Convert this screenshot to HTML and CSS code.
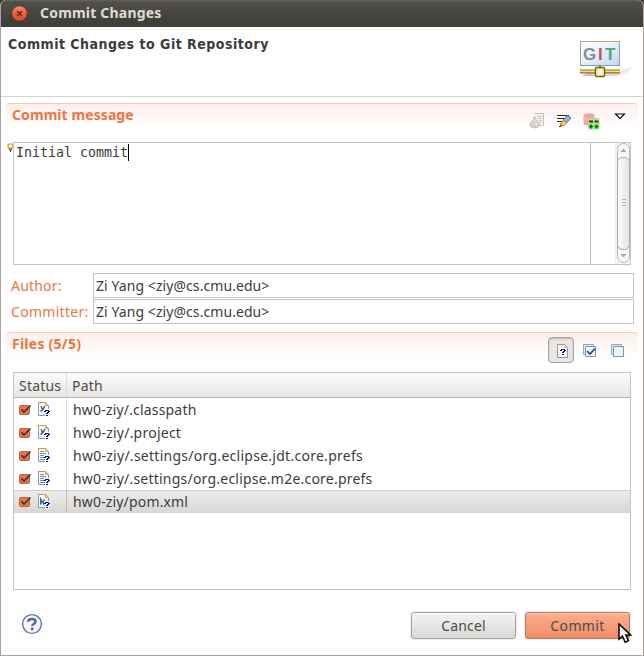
FILE: index.html
```html
<!DOCTYPE html>
<html lang="en">
<head>
<meta charset="utf-8">
<title>Commit Changes</title>
<link rel="stylesheet" href="styles.css">
</head>
<body>
<svg class="defs" width="0" height="0" aria-hidden="true">
  <defs>
    <linearGradient id="close" x2="0" y2="1"><stop stop-color="#f79070"/><stop offset=".5" stop-color="#ee6137"/><stop offset="1" stop-color="#dc4a20"/></linearGradient>
    <linearGradient id="screen" x2="1" y2="1"><stop stop-color="#fff"/><stop offset=".4" stop-color="#edf4fa"/><stop offset="1" stop-color="#bed6ee"/></linearGradient>
    <linearGradient id="shade"><stop stop-color="#aaa4bd"/><stop offset="1" stop-color="#f4f3f8"/></linearGradient>
    <linearGradient id="thumb"><stop stop-color="#fbfbfa"/><stop offset="1" stop-color="#e6e4e2"/></linearGradient>
    <symbol id="check" viewBox="0 0 14 14">
      <rect x="1.5" y="2.5" width="10" height="9" rx="1.5" fill="#ed7442" stroke="#c4623f"/>
      <path d="M3.5 6.3 6 9 12.5 2.5" fill="none" stroke="#3b3634" stroke-width="1.7"/>
    </symbol>
    <symbol id="page" viewBox="0 0 13 15">
      <path d="M.5.5h7l3 3v10H.5z" fill="#f3f8fe" stroke="#8798b4"/>
      <path d="M.5 7V.5h7l3 3" fill="none" stroke="#b79c58"/>
      <path d="M7.5.5v3h3z" fill="#e4c778" stroke="#b79c58" stroke-width=".6"/>
    </symbol>
    <symbol id="mark" viewBox="0 0 6 8">
      <path d="M0 0h6v4H5v4H1V4H0z" fill="#fff"/>
      <path d="M1 1h4v1H1zM0 2h2v1H0zM4 2h2v1H4zM3 3h2v1H3zM2 4h2v1H2zM2 6h2v1H2z" fill="#000d98" shape-rendering="crispEdges"/>
    </symbol>
    <symbol id="file-y" viewBox="0 0 13 15"><use href="#page" width="13" height="15"/><path d="M3 4.3 4.4 7.5M7 4 4.7 7.7 2.5 9.5" fill="none" stroke="#365681" stroke-width="1.3"/><use href="#mark" x="6" y="7" width="6" height="8"/></symbol>
    <symbol id="file-text" viewBox="0 0 13 15"><use href="#page" width="13" height="15"/><path d="M2 3.5h4M2 5.5h6M2 7.5h6M2 9.5h5M2 11.5h5" stroke="#6d8db7"/><use href="#mark" x="6" y="7" width="6" height="8"/></symbol>
    <symbol id="file-m" viewBox="0 0 13 15"><use href="#page" width="13" height="15"/><path d="M2.8 10.5v-5L6 10V5.5" fill="none" stroke="#286ba5" stroke-width="1.6"/><use href="#mark" x="6" y="7" width="6" height="8"/></symbol>
  </defs>
</svg>
<div class="window">
  <div class="titlebar">
    <svg class="close" viewBox="0 0 17 17"><circle cx="8.5" cy="8.5" r="7.8" fill="url(#close)" stroke="#393630" stroke-width=".8"/><path d="m6 6 5 5m0-5-5 5" stroke="#572d20" stroke-width="1.4"/></svg>
    <span class="title">Commit Changes</span>
  </div>
  <div class="banner">
    <span class="heading">Commit Changes to Git Repository</span>
    <svg class="git" viewBox="0 0 60 42">
      <path d="M2 37 14 32h28l15-7-8 8-9 4z" fill="url(#shade)" opacity=".75"/>
      <rect x="1.5" y="2.5" width="39" height="24" fill="url(#screen)" stroke="#9a9d9e"/>
      <path d="M1 2.5h40" stroke="#c7a381"/><path d="M1 26.5h40" stroke="#7aa0b8"/>
      <text x="4" y="21" class="git-letters"><tspan fill="#8b8e93">G</tspan><tspan x="19" fill="#c25661">I</tspan><tspan x="26" fill="#55a47a">T</tspan></text>
      <path d="M21 27v4" stroke="#50765b" stroke-width="2"/>
      <path d="M1 32.5h40" stroke="#8b7314" stroke-width="4"/><path d="M1 32.3h40" stroke="#eee07a" stroke-width="1.8"/>
      <rect x="16.5" y="28.5" width="9" height="9" rx="1" fill="#f5e7a4" stroke="#806300" stroke-width="1.4"/><rect x="18.5" y="30.5" width="5" height="5" fill="#fffdf0"/>
    </svg>
  </div>
  <div class="section message-section">
    <span class="section-title message-title">Commit message</span>
    <div class="tools message-tools">
      <svg width="16" height="16" viewBox="0 0 16 16"><path d="M5.5.5h9v12H9" fill="#f2f1ef" stroke="#c5c3c0"/><path d="M8 3.5h5M9 5.5h4M10 7.5h3M10 9.5h3" stroke="#c9c7c4"/><path d="M5 3 7 6.5 10 11l-1 3-4 1-4-2 1-4 3-3z" fill="#e2e0dd" stroke="#b9b7b4"/><path d="m4 8 2 2-3 2 4 1" fill="none" stroke="#c2c0bc"/></svg>
      <svg width="16" height="16" viewBox="0 0 16 16"><path d="M1 2.5h12M1 5.5h9M1 8.5h6" stroke="#282b30" stroke-width="1.2"/><path d="M7 7 11.5 2.5 15 5l-4.5 5z" fill="#85b5e8" stroke="#4671a9"/><path d="M5 10 7.5 7l3 3L8 12.5 4 13.5z" fill="#f7cd51" stroke="#b9892c"/><path d="m3 14 3-2" stroke="#333"/></svg>
      <svg width="17" height="17" viewBox="0 0 17 17"><rect x=".5" y=".5" width="11" height="12" rx="3" fill="#f7a1a3"/><path d="M1 5.5q5 2 10 0" fill="none" stroke="#fcc6c7"/><rect x="5" y="5" width="11.5" height="11.5" rx="1.5" fill="#92f292"/><path d="M6 8.5h4m1.5 0h4" stroke="#a9000d" stroke-width="2"/><path d="M6 13.5h4m1.5 0h4M8 11.5v4m5.5-4v4" stroke="#096b13" stroke-width="1.7"/></svg>
      <svg class="menu-arrow" width="12" height="7" viewBox="0 0 12 7"><path d="M1.5 1h9L6 5.5z" fill="#fff" stroke="#111" stroke-width="1.2"/></svg>
    </div>
  </div>
  <div class="editor-row">
    <svg class="bulb" width="7" height="10" viewBox="0 0 7 10"><path d="M2 5 1 4V2l1-1h3l1 1v2L5 5z" fill="#fff7d5" stroke="#d9932c" stroke-width="1.2"/><path d="M2.4 5.2v2h2v-2M3.5 6v3" fill="none" stroke="#665744"/></svg>
    <div class="editor">
      <div class="editor-page"><span class="message">Initial commit</span></div>
      <svg class="scroll" width="16" height="121" viewBox="0 0 16 121"><rect width="16" height="121" fill="#f3f2f0"/><rect x="3.5" y=".5" width="12" height="119" rx="6" fill="#f8f7f6" stroke="#bab7b3"/><rect x="3.5" y="14.5" width="12" height="92" rx="5" class="thumb"/><path d="M6.5 9 9.5 5.5l3 3.5zM6.5 111h6l-3 3.5z" fill="#aaa8a5"/><path d="M8 56.5h4m-4 3h4m-4 3h4" stroke="#bbb9b6"/></svg>
    </div>
  </div>
  <div class="people">
    <span class="person-label">Author:</span><div class="field">Zi Yang &lt;ziy@cs.cmu.edu&gt;</div>
    <span class="person-label committer">Committer:</span><div class="field">Zi Yang &lt;ziy@cs.cmu.edu&gt;</div>
  </div>
  <div class="section files-section">
    <span class="section-title files-title">Files (5/5)</span>
    <div class="tools file-tools">
      <div class="toggle"><svg width="12" height="15" viewBox="0 0 12 15"><path d="M.5.5h7l3 3v10H.5z" fill="#edf5ff" stroke="#8596ae"/><path d="M.5 8V.5h7l3 3" fill="none" stroke="#b59c60"/><path d="M7.5 1v3H10z" fill="#dfbd68"/><use href="#mark" x="3" y="4" width="6" height="8"/></svg></div>
      <svg width="14" height="14" viewBox="0 0 14 14"><path d="M.5.5h10v10H.5z" fill="#dceaf7" stroke="#8ba8c5"/><path d="M2.5 2.5h10v10h-10z" fill="#f1f9ff" stroke="#7e91b0"/><path d="m4 7 3 3 5-5.5" fill="none" stroke="#34465f" stroke-width="1.7"/></svg>
      <svg width="14" height="14" viewBox="0 0 14 14"><path d="M.5.5h10v10H.5z" fill="#dceaf7" stroke="#8ba8c5"/><path d="M2.5 2.5h10v10h-10z" fill="#eaf5ff" stroke="#7e91b0"/></svg>
    </div>
  </div>
  <div class="table">
    <div class="row head"><span class="status">Status</span><span class="path">Path</span></div>
    <div class="row"><span class="status"><svg class="check"><use href="#check"/></svg><svg class="file"><use href="#file-y"/></svg></span><span class="path p1">hw0-ziy/.classpath</span></div>
    <div class="row"><span class="status"><svg class="check"><use href="#check"/></svg><svg class="file"><use href="#file-y"/></svg></span><span class="path p2">hw0-ziy/.project</span></div>
    <div class="row"><span class="status"><svg class="check"><use href="#check"/></svg><svg class="file"><use href="#file-text"/></svg></span><span class="path p3">hw0-ziy/.settings/org.eclipse.jdt.core.prefs</span></div>
    <div class="row"><span class="status"><svg class="check"><use href="#check"/></svg><svg class="file"><use href="#file-text"/></svg></span><span class="path p4">hw0-ziy/.settings/org.eclipse.m2e.core.prefs</span></div>
    <div class="row selected"><span class="status"><svg class="check"><use href="#check"/></svg><svg class="file"><use href="#file-m"/></svg></span><span class="path p5">hw0-ziy/pom.xml</span></div>
  </div>
  <div class="footer">
    <svg class="help" width="22" height="22" viewBox="0 0 22 22"><circle cx="11" cy="11" r="9.4" fill="#f3f5f8" stroke="#647691" stroke-width="1.4"/><path d="M7.3 8.8V8Q7.6 6 11 6t3.5 2.4q0 1.5-1.6 2.4-1.7.8-1.7 2.2M11.2 14.6v2.6" fill="none" stroke="#57698a" stroke-width="2.5"/></svg>
    <div class="button">Cancel</div>
    <div class="button primary">Commit</div>
  </div>
  <svg class="pointer" width="14" height="21" viewBox="0 0 14 21"><path d="M1 1v15.2l3.5-3.1 2.7 6.1 3.3-1.5-2.7-5.8h4.7z" fill="#fff" stroke="#050505" stroke-width="1.5"/></svg>
</div>
</body>
</html>
```
FILE: styles.css
```css
* { box-sizing: border-box; }
body { margin: 0; background: #3c3b37; font: 14px/22px "Noto Sans", sans-serif; color: #3c3c3c; }
svg { display: block; flex: none; }
.defs { position: absolute; }
.window { position: relative; width: 644px; height: 656px; background: #fff; border: 1px solid #aaa49f; border-top: 0; border-radius: 6px 6px 0 0; overflow: hidden; }
.titlebar { display: flex; align-items: center; height: 27px; margin: 0 -1px; padding-left: 11px; background: linear-gradient(#666560 0, #504f49 2px, #3c3b37); }
.close { width: 17px; height: 17px; }
.title { margin: -1px 0 0 12px; font-weight: bold; letter-spacing: .2px; color: #dfdbd2; }
.banner { display: flex; justify-content: space-between; height: 70px; padding: 6px 4px 0 7px; border-bottom: 1px solid #d4d4d4; }
.heading { font: bold 14px/22px "DejaVu Sans Condensed", "DejaVu Sans", sans-serif; font-stretch: condensed; letter-spacing: .5px; }
.git { width: 60px; height: 42px; margin-top: 6px; }
.git-letters { font: bold 17px "Liberation Sans", sans-serif; }
.section { display: flex; justify-content: space-between; margin: 0 5px; padding-left: 6px; border-top: 1px solid #f9cdb9; border-radius: 4px; background: linear-gradient(#fdefeb, #fff 24px); }
.message-section { height: 39px; margin-top: 6px; }
.section-title { font-weight: bold; color: #ee7543; white-space: nowrap; }
.message-title { letter-spacing: .08px; }
.files-title { letter-spacing: .25px; }
.tools { display: flex; align-items: flex-start; }
.message-tools { gap: 11px; padding: 9px 12px 0 0; }
.menu-arrow { margin-left: 3px; }
.editor-row { display: flex; height: 123px; padding-left: 6px; }
.bulb { margin: 1px -1px 0 0; }
.editor { display: flex; width: 618px; border: 1px solid #c4c4c4; }
.editor-page { width: 577px; padding: 1px 0 0 2px; border-right: 1px solid #b8b8b8; }
.message { display: block; width: 113px; height: 17px; border-right: 1px solid #000; font: 13.3px/17px "DejaVu Sans Mono", monospace; white-space: pre; }
.scroll { margin-left: auto; }
.thumb { fill: url(#thumb); stroke: #aaa7a3; }
.people { display: grid; grid-template-columns: 82px 541px; row-gap: 1px; margin: 8px 0 0 10px; }
.person-label { line-height: 25px; letter-spacing: .2px; color: #ee7543; }
.committer { letter-spacing: .3px; }
.field { height: 25px; padding-left: 2px; border: 1px solid #c4c4c4; line-height: 23px; letter-spacing: .07px; }
.files-section { height: 40px; margin-top: 8px; }
.file-tools { gap: 14px; padding-right: 13px; }
.file-tools > svg { margin-top: 11px; }
.toggle { display: flex; align-items: center; justify-content: center; width: 26px; height: 26px; margin: 4px -5px 0 0; padding: 2px 0 0 3px; border: 1px solid #aaa5a0; border-radius: 4px; background: #e7e6e4; box-shadow: inset 0 1px 2px #bbb7b2; }
.table { width: 618px; height: 218px; margin-left: 12px; border: 1px solid #c4c4c4; }
.row { display: flex; height: 23px; line-height: 23px; white-space: nowrap; }
.head { height: 25px; line-height: 25px; background: linear-gradient(#fcfcfb, #e7e6e4); border-bottom: 1px solid #b8b5b1; letter-spacing: .2px; color: #4c4c4c; }
.status { display: flex; width: 53px; padding-left: 5px; border-right: 1px solid #dedede; }
.path { padding-left: 6px; }
.head .path { padding-left: 5px; }
.p1 { letter-spacing: .18px; }
.p2 { letter-spacing: .24px; }
.p3 { letter-spacing: .27px; }
.p4 { letter-spacing: .22px; }
.p5 { letter-spacing: .16px; }
.check { width: 14px; height: 14px; margin: 5px 5px 0 -1px; }
.file { width: 13px; height: 15px; margin: 4px 0 0 1px; }
.selected { line-height: 21px; background: linear-gradient(#ebebea, #d8d7d5); border-top: 1px solid #d0cfcd; }
.selected .check { margin-top: 4px; }
.selected .file { margin-top: 3px; }
.selected .status { border-color: #bbb; }
.footer { display: flex; margin-top: 22px; padding: 0 13px 0 20px; }
.help { margin: 1px auto 0 0; }
.button { width: 105px; height: 27px; border: 1px solid #a6a39f; border-radius: 3px; background: linear-gradient(#f4f4f3, #d8d8d7); box-shadow: 0 0 0 1px #f1f1f0, inset 0 1px #fff; text-align: center; line-height: 25px; letter-spacing: .15px; color: #4c4c4c; }
.primary { margin-left: 9px; border-color: #ad7c69; background: linear-gradient(#fbb092, #f08b65); box-shadow: 0 0 0 1px #f1efed, inset 0 1px #ffc5ae; letter-spacing: .35px; }
.pointer { position: absolute; left: 617px; top: 623px; }
```
